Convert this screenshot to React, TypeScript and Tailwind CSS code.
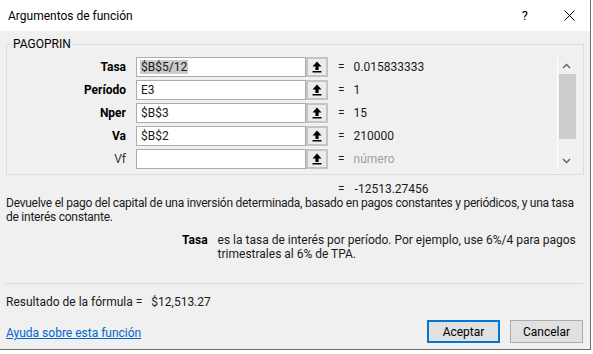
import React from 'react';

const font = "font-['Roboto','Liberation_Sans',sans-serif]";

function RefButton() {
    return (
        <div className="w-[22px] h-[20px] border-2 border-[#c4c4c4] bg-[#ececec] flex items-center justify-center">
            <svg width="10" height="12" viewBox="0 0 10 12">
                <path d="M5 0.5 L9.5 5.5 H6.6 V9 H3.4 V5.5 H0.5 Z" fill="#000" />
                <rect x="0.5" y="10" width="9" height="1.5" fill="#000" />
            </svg>
        </div>
    );
}

type Arg = { label: string; value: string; result: string; bold: boolean; selected?: boolean; hint?: boolean };

const args: Arg[] = [
    { label: 'Tasa', value: '$B$5/12', result: '0.015833333', bold: true, selected: true },
    { label: 'Período', value: 'E3', result: '1', bold: true },
    { label: 'Nper', value: '$B$3', result: '15', bold: true },
    { label: 'Va', value: '$B$2', result: '210000', bold: true },
    { label: 'Vf', value: '', result: 'número', bold: false, hint: true },
];

function ArgRow({ a }: { a: Arg }) {
    return (
        <div className="h-[20px] mb-[3px] flex items-center">
            <div className={`w-[120px] text-right pr-[1px] ${a.bold ? 'font-bold text-black' : 'text-[#333]'}`}>{a.label}</div>
            <div className="ml-[9px] w-[170px] h-[20px] bg-white border border-[#acacac] flex items-center pl-[3px]">
                <span className={a.selected ? 'bg-[#cccccc] px-[1px]' : 'px-[1px]'}>{a.value}</span>
            </div>
            <RefButton />
            <span className="ml-[10px]">=</span>
            <span className={`ml-[9px] ${a.hint ? 'text-[#a0a0a0]' : ''}`}>{a.result}</span>
        </div>
    );
}

function Chevron({ up }: { up?: boolean }) {
    return (
        <svg width="9" height="6" viewBox="0 0 9 6">
            <path d={up ? 'M1 5 L4.5 1.5 L8 5' : 'M1 1 L4.5 4.5 L8 1'} stroke="#606060" strokeWidth="1.4" fill="none" />
        </svg>
    );
}

export default function App() {
    return (
        <div className={`${font} w-[593px] h-[354px] bg-white relative overflow-hidden text-[12px] leading-[14px] text-[#1a1a1a]`}>
            <div className="w-[591px] h-[350px] border-r border-b border-[#6e6e6e] bg-[#f0f0f0] flex flex-col">
                <div className="h-[31px] bg-white flex items-center pl-[8px] shrink-0">
                    <span className="text-[12px] text-black">Argumentos de función</span>
                    <span className="ml-auto mr-[36px] text-[13px] text-black">?</span>
                    <svg className="mr-[15px]" width="11" height="11" viewBox="0 0 11 11">
                        <path d="M0.5 0.5 L10.5 10.5 M10.5 0.5 L0.5 10.5" stroke="#000" strokeWidth="1" />
                    </svg>
                </div>
                <div className="px-[6px] flex flex-col">
                    <fieldset className="mt-[5px] border border-[#dcdcdc] w-[578px] pb-[2px] pr-[8px] flex">
                        <legend className="ml-[4px] px-[2px] leading-[16px] text-black">PAGOPRIN</legend>
                        <div className="pt-[5px] flex flex-1">
                            <div className="flex-1">
                                {args.map((a) => (
                                    <ArgRow key={a.label} a={a} />
                                ))}
                            </div>
                            <div className="w-[18px] h-[112px] border-l border-white flex flex-col items-center">
                                <div className="h-[17px] flex items-center justify-center"><Chevron up /></div>
                                <div className="w-[17px] ml-[1px] h-[65px] bg-[#cdcdcd]" />
                                <div className="flex-1" />
                                <div className="h-[17px] flex items-center justify-center"><Chevron /></div>
                            </div>
                        </div>
                    </fieldset>
                    <div className="mt-[7px] ml-[332px] flex">
                        <span>=</span>
                        <span className="ml-[10px]">-12513.27456</span>
                    </div>
                    <p className="whitespace-nowrap tracking-[-0.25px]">
                        Devuelve el pago del capital de una inversión determinada, basado en pagos constantes y periódicos, y una tasa
                        <br />
                        de interés constante.
                    </p>
                    <div className="mt-[9px] ml-[176px] flex">
                        <span className="font-bold text-black">Tasa</span>
                        <span className="ml-[10px]">
                            es la tasa de interés por período. Por ejemplo, use 6%/4 para pagos
                            <br />
                            trimestrales al 6% de TPA.
                        </span>
                    </div>
                    <div className="mt-[22px] border-t border-[#d9d9d9] w-[577px]" />
                    <div className="mt-[11px] flex">
                        <span>Resultado de la fórmula =</span>
                        <span className="ml-[9px]">$12,513.27</span>
                    </div>
                    <div className="mt-[11px] flex items-center">
                        <a href="#" className="mt-[3px] text-[#0066cc] underline">Ayuda sobre esta función</a>
                        <button className="ml-auto w-[73px] h-[23px] border-2 border-[#0078d7] bg-[#e1e1e1] text-black">Aceptar</button>
                        <button className="ml-[10px] mr-[1px] w-[73px] h-[23px] border border-[#adadad] bg-[#e1e1e1] text-black">Cancelar</button>
                    </div>
                </div>
            </div>
        </div>
    );
}
